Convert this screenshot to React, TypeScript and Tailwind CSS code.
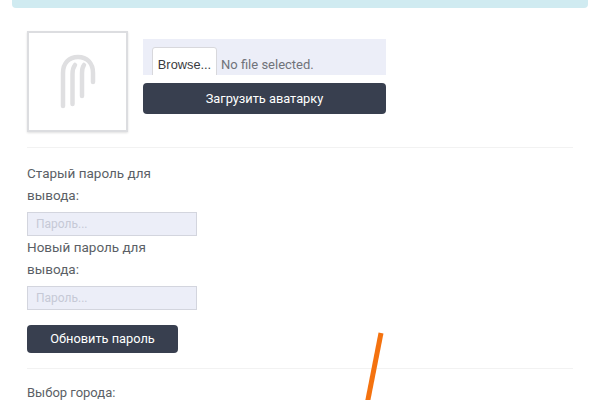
const font = "font-['Roboto','Noto_Sans',sans-serif]";

function PasswordField({ label }: { label: string }) {
  return (
    <div className="w-[170px]">
      <label className="block text-[13.5px] leading-[22px] text-[#5b5f66] pb-[6px]">{label}</label>
      <div className="h-[24px] border border-[#d3d5de] bg-[#eceef8] px-[8px] text-[12px] leading-[22px] text-[#c6c9d6]">
        Пароль...
      </div>
    </div>
  );
}

export default function App() {
  return (
    <div className={`relative h-[400px] w-[600px] overflow-hidden bg-white ${font}`}>
      <div className="mx-[12px] h-[8px] rounded-b-[4px] bg-[#d0ebf1]" />

      <div className="px-[27px]">
        <div className="flex gap-[15px] pt-[23px]">
          <div className="flex h-[101px] w-[101px] items-center justify-center border-2 border-[#dcdde0] bg-white shadow-[0_1px_2px_rgba(0,0,0,0.12)]">
            <svg width="36" height="56" viewBox="0 0 36 56" fill="none" stroke="#dfdfe1" strokeWidth="4.5" strokeLinecap="round">
              <path d="M3 52V19C3 9 9 3 18 3C27 3 33 9 33 19V28" />
              <path d="M12.500 50V20C12.500 16 13.500 13 15 11" />
              <path d="M22 42V19C22 15 22.500 13 24 11" />
            </svg>
          </div>

          <div className="w-[243px] pt-[8px]">
            <div className="flex h-[36px] items-start overflow-hidden bg-[#eceef8] pl-[9px] pt-[8px]">
              <div className="h-[36px] w-[65px] shrink-0 rounded-[3px] border border-[#d8d8dc] bg-white pt-[7px] text-center font-['Liberation_Sans',sans-serif] text-[12.8px] leading-[20px] text-[#3a3a3e]">
                Browse...
              </div>
              <span className="pl-[4px] pt-[8px] text-[13px] leading-[20px] text-[#70737a]">No file selected.</span>
            </div>
            <button className="mt-[8px] block h-[31px] w-full rounded-[4px] bg-[#383f4f] text-center text-[12.8px] text-white">
              Загрузить аватарку
            </button>
          </div>
        </div>

        <div className="mt-[15px] h-px bg-[#f2f2f2]" />

        <div className="flex flex-col pt-[14px]">
          <PasswordField label="Старый пароль для вывода:" />
          <PasswordField label="Новый пароль для вывода:" />
        </div>

        <button className="mt-[15px] block h-[28px] w-[151px] rounded-[4px] bg-[#383f4f] text-center text-[12.8px] text-white">
          Обновить пароль
        </button>

        <div className="mt-[15px] h-px bg-[#f2f2f2]" />

        <div className="pt-[13px] text-[13px] leading-[22px] text-[#5b5f66]">Выбор города:</div>
      </div>

      <svg className="absolute left-[360px] top-[330px]" width="30" height="70" viewBox="0 0 30 70" fill="none">
        <path d="M21 3L7.500 72" stroke="#f4720f" strokeWidth="5" />
      </svg>
    </div>
  );
}
